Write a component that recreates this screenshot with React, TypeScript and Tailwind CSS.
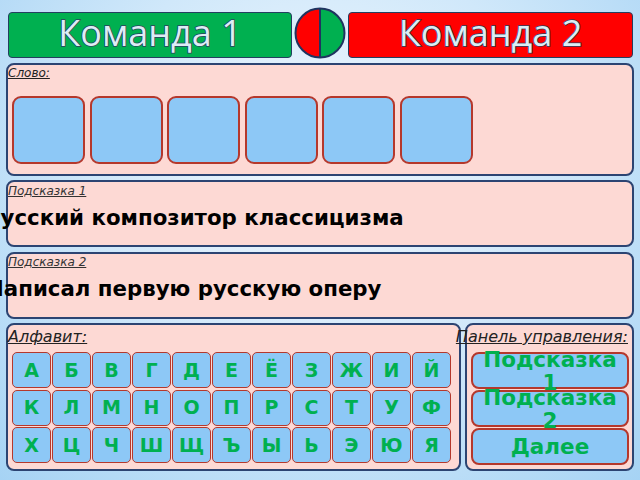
import React from "react";

const letters = [
  "А","Б","В","Г","Д","Е","Ё","З","Ж","И","Й",
  "К","Л","М","Н","О","П","Р","С","Т","У","Ф",
  "Х","Ц","Ч","Ш","Щ","Ъ","Ы","Ь","Э","Ю","Я",
];

function TeamCircle() {
  return (
    <svg width="52" height="52" viewBox="0 0 52 52" className="shrink-0">
      <path d="M26 1.5 A24.5 24.5 0 0 0 26 50.5 Z" fill="#ff0000" />
      <path d="M26 1.5 A24.5 24.5 0 0 1 26 50.5 Z" fill="#00b050" />
      <circle cx="26" cy="26" r="24.5" fill="none" stroke="#1f3460" strokeWidth="2" />
      <line x1="26" y1="1.5" x2="26" y2="50.5" stroke="#1f3460" strokeWidth="2" />
    </svg>
  );
}

export default function App() {
  return (
    <div className="w-[640px] h-[480px] overflow-hidden bg-[radial-gradient(ellipse_at_50%_35%,#f1f8fe_0%,#d0e8fa_50%,#a6d3f4_100%)] font-['DejaVu_Sans',sans-serif]">
      {/* header */}
      <div className="flex items-end pl-[8px] pt-[7px]">
        <div className="w-[284px] h-[46px] bg-[#00b050] border-[1.5px] border-[#243f60] rounded-[4px] flex items-center justify-center">
          <span className="font-['Open_Sans',sans-serif] text-[36px] leading-none text-[#dcedf4] [-webkit-text-stroke:1.5px_#2b3f5e] [paint-order:stroke_fill] pb-[5px]">
            Команда 1
          </span>
        </div>
        <div className="ml-[2px] mb-[-1px]">
          <TeamCircle />
        </div>
        <div className="ml-[2px] w-[285px] h-[46px] bg-[#ff0000] border-[1.5px] border-[#243f60] rounded-[4px] flex items-center justify-center">
          <span className="font-['Open_Sans',sans-serif] text-[36px] leading-none text-[#dcedf4] [-webkit-text-stroke:1.5px_#2b3f5e] [paint-order:stroke_fill] pb-[5px]">
            Команда 2
          </span>
        </div>
      </div>

      {/* word panel */}
      <div className="mt-[5px] ml-[6px] w-[628px] h-[113px] bg-[#fdd9d4] border-2 border-[#2c4472] rounded-[8px]">
        <div className="text-[12px] leading-[16px] italic underline text-[#222]">Слово:</div>
        <div className="mt-[15px] ml-[4px] flex gap-[4.5px]">
          {[0, 1, 2, 3, 4, 5].map((i) => (
            <div
              key={i}
              className="w-[73px] h-[68px] bg-[#8dc8f6] border-2 border-[#b5382c] rounded-[9px]"
            />
          ))}
        </div>
      </div>

      {/* hint 1 */}
      <div className="mt-[4px] ml-[6px] w-[628px] h-[67px] bg-[#fdd9d4] border-2 border-[#2c4472] rounded-[8px]">
        <div className="pt-[1px] text-[12px] leading-[16px] italic underline text-[#333]">Подсказка 1</div>
        <div className="mt-[6px] ml-[-23px] whitespace-nowrap text-[21.3px] leading-[25px] font-bold text-black">
          Русский композитор классицизма
        </div>
      </div>

      {/* hint 2 */}
      <div className="mt-[5px] ml-[6px] w-[628px] h-[67px] bg-[#fdd9d4] border-2 border-[#2c4472] rounded-[8px]">
        <div className="text-[12px] leading-[16px] italic underline text-[#333]">Подсказка 2</div>
        <div className="mt-[6px] ml-[-22px] whitespace-nowrap text-[21.3px] leading-[25px] font-bold text-black">
          Написал первую русскую оперу
        </div>
      </div>

      {/* bottom */}
      <div className="mt-[4px] ml-[6px] flex gap-[4px]">
        <div className="w-[455px] h-[148px] bg-[#fdd9d4] border-2 border-[#2c4472] rounded-[8px]">
          <div className="pt-[2px] text-[16px] leading-[19px] italic underline text-[#222]">Алфавит:</div>
          <div className="mt-[6px] ml-[4px] grid grid-cols-[repeat(11,39px)] gap-x-[1px] gap-y-[1.5px]">
            {letters.map((l) => (
              <div
                key={l}
                className="h-[36px] bg-[#8dc8f6] border-[1.5px] border-[#b5382c] rounded-[5px] flex items-center justify-center text-[19px] font-bold text-[#00b050]"
              >
                {l}
              </div>
            ))}
          </div>
        </div>
        <div className="w-[169px] h-[148px] bg-[#fdd9d4] border-2 border-[#2c4472] rounded-[8px]">
          <div className="pt-[2px] pr-[4px] flex justify-end">
            <span className="whitespace-nowrap text-[16px] leading-[19px] italic underline text-[#222]">
              Панель управления:
            </span>
          </div>
          <div className="mt-[6px] ml-[4px] flex flex-col gap-[1px]">
            {["Подсказка 1", "Подсказка 2", "Далее"].map((t) => (
              <div
                key={t}
                className="w-[158px] h-[37px] bg-[#8dc8f6] border-2 border-[#b5382c] rounded-[8px] flex items-center justify-center"
              >
                <span className="w-[140px] text-center text-[21.5px] leading-[23px] font-bold text-[#00b050]">
                  {t}
                </span>
              </div>
            ))}
          </div>
        </div>
      </div>
    </div>
  );
}
